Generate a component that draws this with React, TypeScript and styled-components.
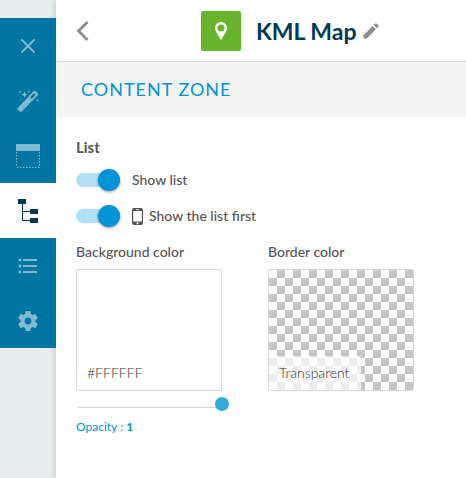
import React, { useState } from 'react';
import styled, { createGlobalStyle, css } from 'styled-components';

const GlobalStyle = createGlobalStyle`
  *, *::before, *::after { box-sizing: border-box; }
  body {
    margin: 0;
    background: #e8eeee;
    color: #555;
    font-family: Lato, 'Open Sans', sans-serif;
    font-size: 14px;
    line-height: 20px;
  }
  button { font: inherit; color: inherit; cursor: pointer; }
`;

const Page = styled.div`
  display: flex;
  min-height: 100vh;
`;

const Sidebar = styled.nav`
  flex: 0 0 56px;
  padding-top: 18px;
`;

const NavButton = styled.button<{ $active?: boolean }>`
  display: flex;
  align-items: center;
  justify-content: center;
  width: 100%;
  height: 55px;
  padding: 0;
  border: 0;
  background: ${({ $active }) => ($active ? '#fff' : '#0075a2')};
  color: ${({ $active }) => ($active ? '#003a52' : '#80bad1')};
  svg { display: block; }
`;

const Panel = styled.main`
  flex: 1;
  min-width: 0;
  background: #fff;
  box-shadow: 0 0 8px rgba(0, 0, 0, 0.2);
  clip-path: inset(0 0 0 -8px);
`;

const NavLayer = styled.div`
  position: relative;
  z-index: 1;
`;

const Header = styled.header`
  display: flex;
  align-items: center;
  height: 62px;
  padding: 0 20px;
  border-bottom: 1px solid #d5d7d7;
`;

const IconButton = styled.button`
  display: flex;
  padding: 0;
  border: 0;
  background: none;
  color: #8c8c8c;
`;

const TitleGroup = styled.div`
  display: flex;
  align-items: center;
  margin-left: 112px;
`;

const AppTile = styled.span`
  display: flex;
  align-items: center;
  justify-content: center;
  width: 40px;
  height: 40px;
  margin-right: 15px;
  border-radius: 2px;
  background: #67b32e;
  color: #fff;
`;

const Title = styled.h1`
  margin: 0 6px 0 0;
  color: #003a52;
  font-size: 23px;
  font-weight: 700;
  line-height: 32px;
  white-space: nowrap;
`;

const SectionBar = styled.h2`
  margin: 0;
  padding: 0 25px;
  background: #f5f5f5;
  color: #0093d6;
  font-size: 18px;
  font-weight: 400;
  letter-spacing: 1px;
  line-height: 55px;
  text-transform: uppercase;
`;

const Settings = styled.section`
  padding: 20px 52px 20px 20px;
`;

const GroupTitle = styled.h3`
  margin: 0 0 5px;
  font-size: 15px;
  font-weight: 700;
  line-height: 20px;
`;

const ToggleRow = styled.label`
  display: flex;
  align-items: center;
  height: 36px;
  font-weight: 500;
  cursor: pointer;
`;

const Toggle = styled.input`
  appearance: none;
  display: flex;
  align-items: center;
  width: 44px;
  height: 14px;
  margin: 0 12px 0 0;
  border-radius: 7px;
  background: #d5d7d7;
  cursor: pointer;
  &::before {
    content: '';
    width: 22px;
    height: 22px;
    border-radius: 50%;
    background: #fff;
    box-shadow: 0 1px 3px rgba(0, 0, 0, 0.4);
  }
  &:checked {
    justify-content: flex-end;
    background: #b2dff3;
  }
  &:checked::before { background: #0093d6; }
`;

const PhoneIcon = styled.svg`
  margin-right: 6px;
`;

const ColorGrid = styled.div`
  display: grid;
  grid-template-columns: repeat(2, minmax(0, 1fr));
  column-gap: 46px;
  align-items: start;
  margin-top: 8px;
`;

const FieldLabel = styled.div`
  margin-bottom: 7px;
  font-weight: 500;
`;

const Swatch = styled.button<{ $transparent?: boolean }>`
  display: flex;
  align-items: flex-end;
  width: 100%;
  height: 122px;
  padding: 0;
  border: 1px solid #d5d7d7;
  border-radius: 2px;
  background-color: #fff;
  background-clip: padding-box;
  ${({ $transparent }) =>
    $transparent &&
    css`
      background-image: conic-gradient(#c5c5c5 25%, #fff 0 50%, #c5c5c5 0 75%, #fff 0);
      background-size: 16px 16px;
    `}
`;

const SwatchValue = styled.span`
  padding: 7px 12px 7px 10px;
  background: rgba(255, 255, 255, 0.7);
  color: #333;
  font-weight: 300;
  line-height: 20px;
`;

const SliderTrack = styled.div`
  height: 8px;
  margin-top: 9px;
  border: 1px solid transparent;
  border-bottom-color: #d5d7d7;
  border-radius: 3px;
`;

const Slider = styled.input`
  appearance: none;
  display: block;
  width: calc(100% + 16px);
  height: 14px;
  margin: -4px -8px;
  background: none;
  cursor: pointer;
  &::-webkit-slider-thumb {
    appearance: none;
    width: 14px;
    height: 14px;
    border-radius: 50%;
    background: #33a9de;
  }
`;

const OpacityLabel = styled.label`
  display: block;
  margin-top: 9px;
  color: #0093d6;
  font-size: 12px;
  line-height: 20px;
`;

const CloseIcon = () => (
  <svg width="16" height="16" viewBox="0 0 16 16" fill="none" stroke="currentColor" strokeWidth="1.8">
    <path d="M1.5 1.5l13 13M14.5 1.5l-13 13" />
  </svg>
);

const WandIcon = () => (
  <svg width="22" height="22" viewBox="0 0 22 22" fill="currentColor">
    <path
      fillRule="evenodd"
      d="M.7 18 16.300 1.400a1.800 1.800 0 0 1 2.500 0l1.700 1.700a1.800 1.800 0 0 1 0 2.500L4.700 21.600a1.300 1.300 0 0 1-1.800 0L.7 19.800a1.300 1.300 0 0 1 0-1.800ZM13.200 7.200l1.600 1.600 3.800-4-1.600-1.600Z"
    />
    <path d="M7.500 1.500l.9 2.200 2.200.9-2.200.9-.9 2.200-.9-2.200-2.200-.9 2.200-.9zM3 .4l.4 1.100 1.100.4-1.100.4L3 3.400l-.4-1.100-1.100-.4 1.100-.4zM12 .2l.4 1.100 1.100.4-1.100.4-.4 1.100-.4-1.100-1.100-.4 1.100-.4zM20.500 8.800l.4 1.100 1.100.4-1.100.4-.4 1.100-.4-1.100-1.100-.4 1.100-.4z" />
  </svg>
);

const LayoutIcon = () => (
  <svg width="24" height="24" viewBox="0 0 24 24" fill="none" stroke="currentColor">
    <path d="M0 0h24v7H0z" fill="currentColor" stroke="none" />
    <path d="M.5 8v15M23.5 8v15M1 23.5h23" strokeDasharray="1.5 1.5" />
  </svg>
);

const TreeIcon = () => (
  <svg width="20" height="26" viewBox="0 0 20 26" fill="currentColor">
    <path d="M0 1h8v5H0zM12 11h8v5h-8zM12 20h8v5h-8z" />
    <path d="M4.500 6v16.500H12M4 13.500h8" fill="none" stroke="currentColor" />
  </svg>
);

const ListIcon = () => (
  <svg width="20" height="16" viewBox="0 0 20 16" fill="currentColor">
    <circle cx="2" cy="2" r="1.5" />
    <circle cx="2" cy="8" r="1.5" />
    <circle cx="2" cy="14" r="1.5" />
    <path d="M5 1h14v2H5zM5 7h14v2H5zM5 13h14v2H5z" />
  </svg>
);

const GearIcon = () => (
  <svg width="24" height="24" viewBox="0 0 24 24" fill="currentColor">
    <path d="M19.430 12.980c.04-.32.07-.64.07-.98s-.03-.66-.07-.98l2.110-1.650c.19-.15.240-.42.120-.64l-2-3.460c-.12-.22-.39-.3-.61-.22l-2.490 1c-.52-.4-1.080-.73-1.690-.98l-.38-2.650C14.460 2.180 14.250 2 14 2h-4c-.25 0-.46.18-.49.42l-.38 2.650c-.61.25-1.170.59-1.690.98l-2.490-1c-.23-.09-.49 0-.61.22l-2 3.460c-.13.22-.07.49.12.64l2.110 1.650c-.04.32-.07.65-.07.98s.03.66.07.98l-2.110 1.650c-.19.15-.24.42-.12.64l2 3.460c.12.22.39.3.61.22l2.490-1c.52.4 1.080.73 1.690.98l.38 2.650c.03.24.24.42.49.42h4c.25 0 .46-.18.49-.42l.38-2.650c.61-.25 1.170-.59 1.690-.98l2.490 1c.23.09.49 0 .61-.22l2-3.460c.12-.22.07-.49-.12-.64l-2.110-1.650zM12 15.500c-1.930 0-3.500-1.570-3.500-3.500s1.570-3.500 3.500-3.500 3.500 1.570 3.500 3.500-1.570 3.500-3.500 3.500z" />
  </svg>
);

const navItems = [
  { label: 'Close', Icon: CloseIcon },
  { label: 'Design', Icon: WandIcon },
  { label: 'Layout', Icon: LayoutIcon },
  { label: 'Structure', Icon: TreeIcon, active: true },
  { label: 'Sections', Icon: ListIcon },
  { label: 'Settings', Icon: GearIcon },
];

export default function App() {
  const [opacity, setOpacity] = useState(1);
  return (
    <>
      <GlobalStyle />
      <Page>
        <Sidebar aria-label="Editor">
          <NavLayer>
            {navItems.map(({ label, Icon, active }) => (
              <NavButton key={label} type="button" aria-label={label} $active={active}>
                <Icon />
              </NavButton>
            ))}
          </NavLayer>
        </Sidebar>
        <Panel>
          <Header>
            <IconButton type="button" aria-label="Back">
              <svg width="13" height="20" viewBox="0 0 13 20" fill="none" stroke="currentColor" strokeWidth="2.8">
                <path d="M11.5 1 2.500 10l9 9" />
              </svg>
            </IconButton>
            <TitleGroup>
              <AppTile>
                <svg width="12" height="18" viewBox="0 0 12 18" fill="currentColor">
                  <path
                    fillRule="evenodd"
                    d="M6 0a6 6 0 0 1 6 6c0 2-1 3.600-2.200 5.700L6 18l-3.800-6.300C1 9.600 0 8 0 6a6 6 0 0 1 6-6Zm0 2.400a3.600 3.600 0 1 0 0 7.200 3.600 3.600 0 0 0 0-7.200Z"
                  />
                </svg>
              </AppTile>
              <Title>KML Map</Title>
              <IconButton type="button" aria-label="Rename">
                <svg width="16" height="16" viewBox="0 0 16 16" fill="currentColor">
                  <path d="M.5 12.300 9.700 3.100l3.200 3.200-9.200 9.200H.5zM10.700 2.100 12.200.6a1 1 0 0 1 1.400 0l1.800 1.800a1 1 0 0 1 0 1.400l-1.500 1.500z" />
                </svg>
              </IconButton>
            </TitleGroup>
          </Header>
          <SectionBar>Content zone</SectionBar>
          <Settings>
            <GroupTitle>List</GroupTitle>
            <ToggleRow>
              <Toggle type="checkbox" role="switch" defaultChecked />
              Show list
            </ToggleRow>
            <ToggleRow>
              <Toggle type="checkbox" role="switch" defaultChecked />
              <PhoneIcon width="11" height="17" viewBox="0 0 11 17" fill="currentColor" aria-hidden="true">
                <path
                  fillRule="evenodd"
                  d="M2 0h7a2 2 0 0 1 2 2v13a2 2 0 0 1-2 2H2a2 2 0 0 1-2-2V2a2 2 0 0 1 2-2ZM1.200 3v10.500h8.600V3ZM4 1.200v.8h3v-.8ZM5.500 14.300a1 1 0 1 0 0 2 1 1 0 0 0 0-2Z"
                />
              </PhoneIcon>
              Show the list first
            </ToggleRow>
            <ColorGrid>
              <div>
                <FieldLabel id="background-label">Background color</FieldLabel>
                <Swatch type="button" aria-labelledby="background-label background-value">
                  <SwatchValue id="background-value">#FFFFFF</SwatchValue>
                </Swatch>
                <SliderTrack>
                  <Slider
                    id="opacity"
                    type="range"
                    min="0"
                    max="1"
                    step="0.1"
                    value={opacity}
                    onChange={(event) => setOpacity(Number(event.target.value))}
                  />
                </SliderTrack>
                <OpacityLabel htmlFor="opacity">
                  Opacity : <strong>{opacity}</strong>
                </OpacityLabel>
              </div>
              <div>
                <FieldLabel id="border-label">Border color</FieldLabel>
                <Swatch type="button" $transparent aria-labelledby="border-label border-value">
                  <SwatchValue id="border-value">Transparent</SwatchValue>
                </Swatch>
              </div>
            </ColorGrid>
          </Settings>
        </Panel>
      </Page>
    </>
  );
}
